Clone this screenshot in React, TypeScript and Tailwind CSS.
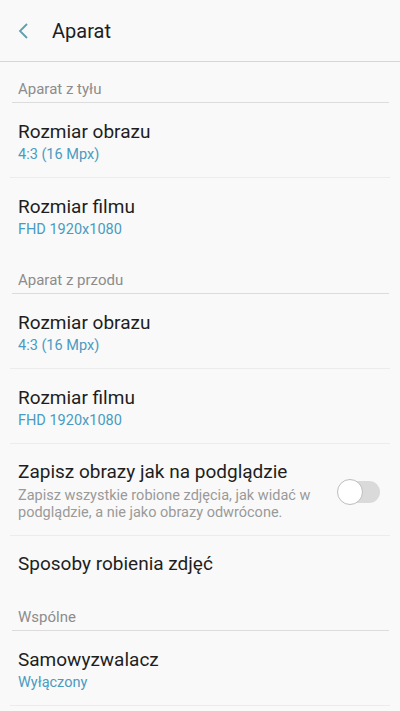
import React from "react";

interface Item {
  title: string;
  sub?: string;
  divider?: boolean;
}

function Section({ label }: { label: string }) {
  return (
    <div className="h-[41px] flex flex-col justify-end pl-[12px] pr-[11px]">
      <div className="border-b border-[#dcdcdc] pb-[3px] pl-[6px] text-[15px] text-[#8c8c8c] leading-[20px]">
        {label}
      </div>
    </div>
  );
}

function Row({ title, sub, divider = true }: Item) {
  return (
    <div className="px-[10px]">
      <div
        className={
          divider
            ? "h-[75px] flex flex-col justify-center pl-[8px] pt-[4px] border-b border-[#ececec]"
            : "h-[75px] flex flex-col justify-center pl-[8px] pt-[4px]"
        }
      >
        <div className="text-[19px] text-[#1e1e1e] leading-[24px]">{title}</div>
        {sub && (
          <div className="text-[14.5px] text-[#4a9bc1] leading-[20px] mt-[1px]">{sub}</div>
        )}
      </div>
    </div>
  );
}

export default function App() {
  return (
    <div
      className="w-[400px] h-[711px] overflow-hidden bg-[#f9f9f9]"
      style={{ fontFamily: "Roboto, 'Noto Sans', sans-serif" }}
    >
      <div className="h-[62px] flex items-center border-b border-[#d6d6d6]">
        <svg width="14" height="20" viewBox="0 0 14 20" className="ml-[17px] mt-[1px]">
          <path d="M10 3 L3 10 L10 17" fill="none" stroke="#5f9fae" strokeWidth="1.8" />
        </svg>
        <div className="ml-[21px] text-[20px] text-[#1e1e1e]">Aparat</div>
      </div>

      <Section label="Aparat z tyłu" />
      <Row title="Rozmiar obrazu" sub="4:3 (16 Mpx)" />
      <Row title="Rozmiar filmu" sub="FHD 1920x1080" divider={false} />

      <Section label="Aparat z przodu" />
      <Row title="Rozmiar obrazu" sub="4:3 (16 Mpx)" />
      <Row title="Rozmiar filmu" sub="FHD 1920x1080" />

      <div className="px-[10px]">
        <div className="h-[92px] flex items-center pl-[8px] pt-[2px] border-b border-[#ececec]">
          <div className="flex-1">
            <div className="text-[19px] text-[#1e1e1e] leading-[24px]">
              Zapisz obrazy jak na podglądzie
            </div>
            <div className="text-[14.5px] text-[#9a9a9a] leading-[17px] mt-[3px]">
              Zapisz wszystkie robione zdjęcia, jak widać w
              <br />
              podglądzie, a nie jako obrazy odwrócone.
            </div>
          </div>
          <div className="relative w-[42px] h-[22px] rounded-full bg-[#dadada] mr-[10px] mt-[2px]">
            <div className="absolute left-[-1px] top-[-2px] w-[26px] h-[26px] rounded-full bg-white border border-[#bdbdbd]" />
          </div>
        </div>
      </div>

      <div className="px-[10px]">
        <div className="h-[54px] flex items-center pl-[8px] pt-[2px]">
          <div className="text-[19px] text-[#1e1e1e] leading-[24px]">Sposoby robienia zdjęć</div>
        </div>
      </div>

      <Section label="Wspólne" />
      <Row title="Samowyzwalacz" sub="Wyłączony" />
    </div>
  );
}
